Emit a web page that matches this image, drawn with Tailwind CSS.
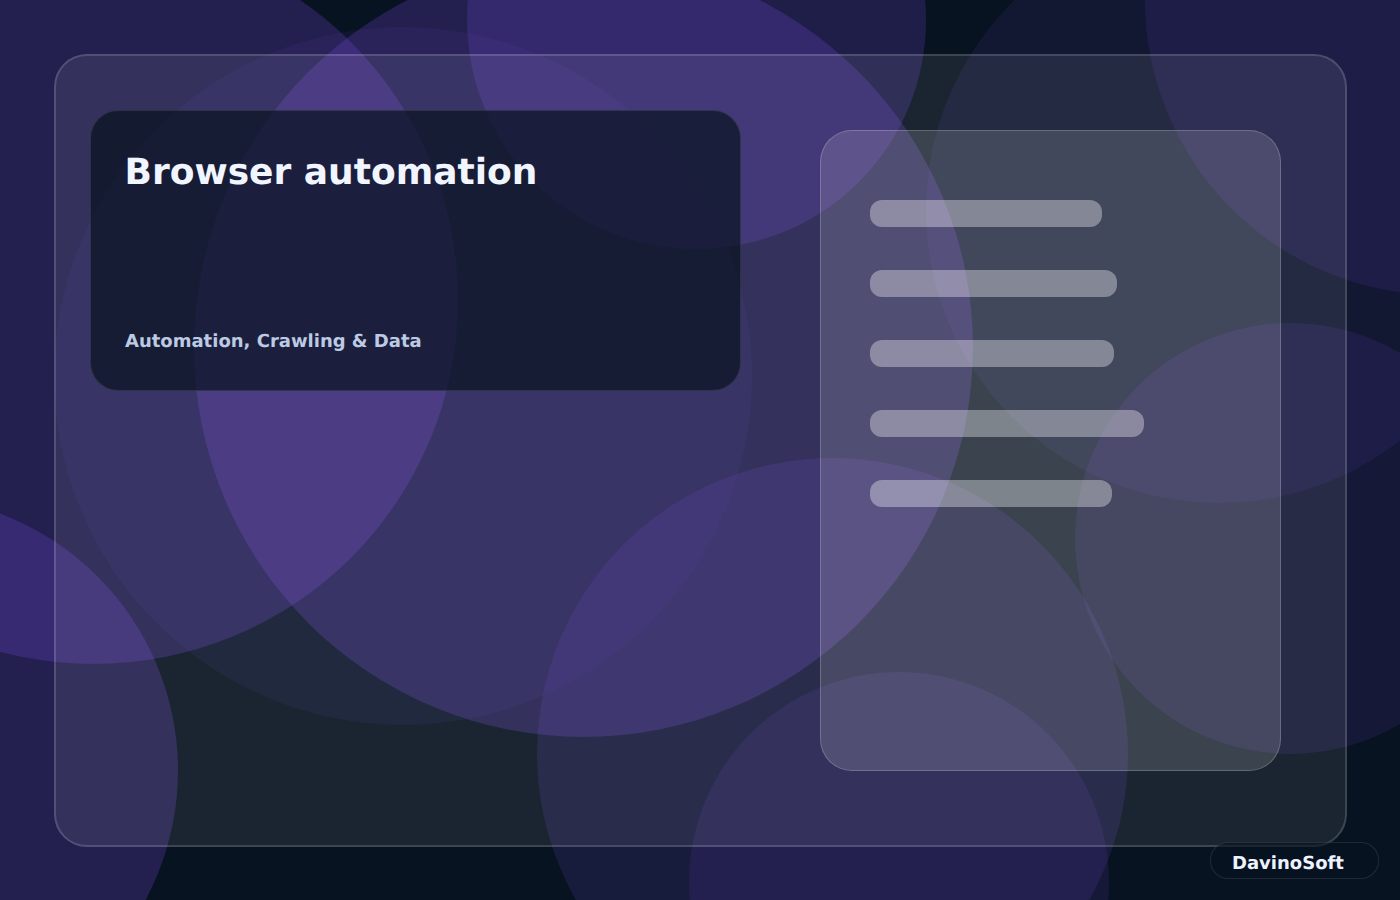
<!DOCTYPE html>
<html lang="en">
<head>
<meta charset="utf-8">
<title>Browser automation</title>
<script src="https://cdn.jsdelivr.net/npm/@tailwindcss/browser@4"></script>
</head>
<body class="m-0 bg-[#071320]">
<div class="relative w-[1400px] h-[900px] overflow-hidden bg-[#071320] font-['DejaVu_Sans',sans-serif] [text-rendering:geometricPrecision]">
    <!-- background circles -->
    <div class="absolute left-[-270px] top-[-64px] w-[728px] h-[728px] rounded-full bg-[#7648dc]/25"></div>
    <div class="absolute left-[194px] top-[-42px] w-[779px] h-[779px] rounded-full bg-[#7648dc]/25"></div>
    <div class="absolute left-[54px] top-[27px] w-[698px] h-[698px] rounded-full bg-[#7648dc]/8"></div>
    <div class="absolute left-[467px] top-[-209px] w-[459px] h-[458px] rounded-full bg-[#7648dc]/22"></div>
    <div class="absolute left-[926px] top-[-83px] w-[586px] h-[586px] rounded-full bg-[#7648dc]/10"></div>
    <div class="absolute left-[1145px] top-[-295px] w-[590px] h-[590px] rounded-full bg-[#7648dc]/13"></div>
    <div class="absolute left-[1075px] top-[323px] w-[431px] h-[431px] rounded-full bg-[#7648dc]/13"></div>
    <div class="absolute left-[537px] top-[458px] w-[591px] h-[591px] rounded-full bg-[#7648dc]/15"></div>
    <div class="absolute left-[689px] top-[672px] w-[420px] h-[420px] rounded-full bg-[#7648dc]/13"></div>
    <div class="absolute left-[-371px] top-[496px] w-[549px] h-[549px] rounded-full bg-[#7648dc]/25"></div>

    <!-- main panel -->
    <div class="relative pl-[54px] pt-[54px]">
        <div class="flex items-start justify-between w-[1293px] h-[793px] pl-[34px] pr-[64px] pt-[54px] rounded-[33px] border-2 border-white/15 bg-white/[0.08]">
            <div class="flex flex-col justify-between w-[651px] h-[281px] px-[34px] pt-[39px] pb-[36px] rounded-[28px] border border-white/10 bg-[#071320]/70">
                <h1 class="-ml-[0.5px] text-[36px] leading-[46px] font-bold text-[#f1f5ff]">Browser automation</h1>
                <p class="text-[18px] leading-[24px] font-bold text-[#bccae3]">Automation, Crawling &amp; Data</p>
            </div>
            <div class="flex flex-col gap-[43px] w-[461px] h-[641px] mt-[20px] pl-[49px] pt-[69px] rounded-[32px] border border-white/20 bg-white/[0.14]">
                <div class="w-[232px] h-[27px] rounded-[12px] bg-white/35"></div>
                <div class="w-[247px] h-[27px] rounded-[12px] bg-white/35"></div>
                <div class="w-[244px] h-[27px] rounded-[12px] bg-white/35"></div>
                <div class="w-[274px] h-[27px] rounded-[12px] bg-white/35"></div>
                <div class="w-[242px] h-[27px] rounded-[12px] bg-white/35"></div>
            </div>
        </div>
    </div>

    <!-- brand badge -->
    <div class="absolute left-[1210px] top-[842px] flex items-center w-[169px] h-[37px] pl-[21px] pt-[6px] rounded-[18px] border border-white/10 bg-[#071320]/60 text-[18px] font-bold text-[#eef3ff]">DavinoSoft</div>
</div>
</body>
</html>
